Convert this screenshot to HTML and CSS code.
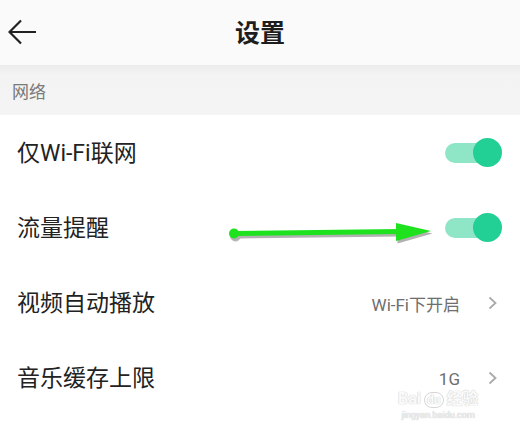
FILE: index.html
```html
<!DOCTYPE html>
<html lang="zh">
<head>
<meta charset="utf-8">
<link rel="stylesheet" href="styles.css">
</head>
<body>
<div class="screen">
  <header class="topbar">
    <svg class="back" width="30" height="28" viewBox="0 0 30 28"><path d="M28 13H2M13 1.5 1.5 13 13 24.5" fill="none" stroke="#222" stroke-width="2.2"/></svg>
    <h1 class="title">设置</h1>
  </header>
  <div class="section">网络</div>
  <ul class="list">
    <li class="row"><span class="label">仅Wi-Fi联网</span><span class="switch"><span class="knob"></span></span></li>
    <li class="row"><span class="label">流量提醒</span><span class="switch"><span class="knob"></span></span></li>
    <li class="row"><span class="label">视频自动播放</span><span class="value">Wi-Fi下开启</span><svg class="chev" width="10" height="14" viewBox="0 0 10 14"><path d="M1.5 1.5 7.5 7 1.5 12.5" fill="none" stroke="#aaa" stroke-width="1.8"/></svg></li>
    <li class="row"><span class="label">音乐缓存上限</span><span class="value">1G</span><svg class="chev" width="10" height="14" viewBox="0 0 10 14"><path d="M1.5 1.5 7.5 7 1.5 12.5" fill="none" stroke="#aaa" stroke-width="1.8"/></svg></li>
  </ul>
  <svg class="annot" width="520" height="434" viewBox="0 0 520 434">
    <g transform="translate(1.5,2.5)" fill="#555" stroke="#555" opacity="0.45">
      <circle cx="234" cy="233.5" r="5"/>
      <path d="M234 233.5 L400 231.5" stroke-width="5" fill="none"/>
      <path d="M396 223 L431 231 L396 241 Z" stroke="none"/>
    </g>
    <g fill="#1fe21f" stroke="#1fe21f">
      <circle cx="234" cy="233.5" r="5" stroke="none"/>
      <path d="M234 233.5 L400 231.5" stroke-width="5" fill="none"/>
      <path d="M396 223 L431 231 L396 241 Z" stroke="none"/>
    </g>
  </svg>
  <div class="watermark">
    <div class="wm-main">Bai<span class="wm-du">du</span>经验</div>
    <div class="wm-sub">jingyan.baidu.com</div>
  </div>
</div>
</body>
</html>
```

FILE: styles.css
```css
* { box-sizing: border-box; margin: 0; padding: 0; }
body {
  font-family: Roboto, "Noto Sans CJK SC", "Noto Sans", sans-serif;
  background: #fff;
  color: #222;
}
.screen {
  position: relative;
  width: 520px;
  height: 434px;
  overflow: hidden;
  background: #fff;
}
.topbar {
  position: relative;
  height: 65px;
  background: #fafafa;
  display: flex;
  align-items: center;
  justify-content: center;
}
.back {
  position: absolute;
  left: 8px;
  top: 19px;
}
.title {
  font-size: 25px;
  font-weight: 700;
  color: #1e1e1e;
  line-height: 1;
  margin-top: 2px;
}
.section {
  height: 50px;
  padding: 17px 0 0 12px;
  font-size: 17px;
  line-height: 20px;
  color: #7a7a7a;
  background: linear-gradient(#ebebeb, #f3f3f3 9px, #f4f4f4);
}
.list { list-style: none; }
.row {
  height: 75px;
  display: flex;
  align-items: center;
  padding: 0 19px 0 17px;
  background: #fff;
}
.label {
  flex: 1;
  font-size: 23px;
  line-height: 1;
  color: #222;
  padding-top: 2px;
}
.switch {
  position: relative;
  width: 56px;
  height: 20px;
  border-radius: 10px;
  background: #8ee6c6;
  display: flex;
  align-items: center;
  justify-content: flex-end;
}
.knob {
  width: 29px;
  height: 29px;
  border-radius: 50%;
  background: #22cf95;
  margin-right: -1px;
}
.value {
  font-size: 17px;
  color: #6e6e6e;
  margin-right: 28px;
  padding-top: 2px;
}
.chev {
  margin-right: 3px;
}
.annot {
  position: absolute;
  left: 0;
  top: 0;
  pointer-events: none;
}
.watermark {
  position: absolute;
  left: 398px;
  top: 388px;
  white-space: nowrap;
  text-align: center;
  color: #fafafa;
  text-shadow: 0 0 1px #c4c4c4, 0 0 1px #c4c4c4;
  opacity: 0.85;
}
.wm-main {
  font-size: 16px;
  font-weight: 700;
  line-height: 22px;
}
.wm-du {
  display: inline-block;
  border: 1px solid #d0d0d0;
  border-radius: 8px;
  font-size: 12px;
  line-height: 14px;
  padding: 0 2px;
  margin: 0 3px;
}
.wm-sub {
  font-size: 9px;
  line-height: 11px;
  color: #eee;
}
```
